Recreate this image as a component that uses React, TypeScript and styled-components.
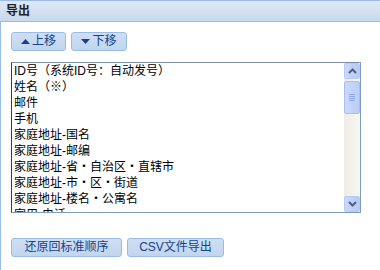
import React from 'react';
import styled, { createGlobalStyle } from 'styled-components';

const GlobalStyle = createGlobalStyle`
  html, body {
    margin: 0;
    padding: 0;
    background: #ffffff;
  }
  body {
    font-family: "Liberation Sans", "Noto Sans CJK SC", sans-serif;
    font-size: 12px;
  }
`;

const fields = [
  'ID号（系统ID号：自动发号）',
  '姓名（※）',
  '邮件',
  '手机',
  '家庭地址-国名',
  '家庭地址-邮编',
  '家庭地址-省・自治区・直辖市',
  '家庭地址-市・区・街道',
  '家庭地址-楼名・公寓名',
  '家用-电话',
];

function Triangle({ down }: { down?: boolean }) {
  return (
    <svg width="9" height="5" viewBox="0 0 9 5">
      {down ? <path d="M0 0H9L4.5 5Z" fill="#15428b" /> : <path d="M0 5H9L4.5 0Z" fill="#15428b" />}
    </svg>
  );
}

function Chevron({ down }: { down?: boolean }) {
  return (
    <svg width="9" height="6" viewBox="0 0 9 6">
      <path
        d={down ? 'M1 1L4.5 4.5L8 1' : 'M1 5L4.5 1.5L8 5'}
        fill="none"
        stroke="#4d6185"
        strokeWidth="2"
      />
    </svg>
  );
}

export default function App() {
  return (
    <>
      <GlobalStyle />
      <Panel>
        <Header>
          <Title>导出</Title>
        </Header>
        <Body>
          <ButtonRow>
            <ToolButton $w={55}>
              <Triangle />
              上移
            </ToolButton>
            <ToolButton $w={56}>
              <Triangle down />
              下移
            </ToolButton>
          </ButtonRow>

          <ListBox>
            <Items>
              {fields.map((f) => (
                <Item key={f}>{f}</Item>
              ))}
            </Items>
            <ScrollBar>
              <ScrollButton>
                <Chevron />
              </ScrollButton>
              <Thumb>
                <Grip />
                <Grip />
                <Grip />
                <Grip />
              </Thumb>
              <Track />
              <ScrollButton>
                <Chevron down />
              </ScrollButton>
            </ScrollBar>
          </ListBox>

          <ButtonRow $bottom>
            <ToolButton $w={111}>还原回标准顺序</ToolButton>
            <ToolButton $w={97}>CSV文件导出</ToolButton>
          </ButtonRow>
        </Body>
      </Panel>
    </>
  );
}

const Panel = styled.div`
  display: flex;
  flex-direction: column;
  width: 380px;
  height: 270px;
  overflow: hidden;
`;

const Header = styled.div`
  display: flex;
  align-items: center;
  height: 20px;
  padding-left: 6px;
  border-top: 1px solid #99bbe8;
  border-bottom: 1px solid #99bbe8;
  background: linear-gradient(to bottom, #dfe9f6, #c6d8ee);
`;

const Title = styled.div`
  font-weight: bold;
  font-size: 12px;
  color: #222222;
  line-height: 20px;
`;

const Body = styled.div`
  flex: 1;
  display: flex;
  flex-direction: column;
  padding: 10px 0 0 10px;
  border-left: 1px solid #99bbe8;
`;

const ButtonRow = styled.div<{ $bottom?: boolean }>`
  display: flex;
  gap: 5px;
  margin-top: ${(p) => (p.$bottom ? '25px' : '0')};
`;

const ToolButton = styled.button<{ $w: number }>`
  display: flex;
  align-items: center;
  justify-content: center;
  gap: 2px;
  width: ${(p) => p.$w}px;
  height: 19px;
  padding: 0;
  border: 1px solid #99bbe8;
  border-radius: 3px;
  background: linear-gradient(to bottom, #cfdff3, #c1d5ee);
  color: #15428b;
  font-family: "Liberation Sans", "Noto Sans CJK SC", sans-serif;
  font-size: 12px;
  line-height: 17px;
  cursor: pointer;
`;

const ListBox = styled.div`
  display: flex;
  width: 348px;
  height: 149px;
  margin-top: 11px;
  border-style: solid;
  border-width: 1px;
  border-color: #7a8ea6 #7f9db9 #7f9db9 #3c3c3c;
  background: #ffffff;
  overflow: hidden;
`;

const Items = styled.div`
  flex: 1;
  overflow: hidden;
`;

const Item = styled.div`
  height: 16px;
  line-height: 16px;
  padding-left: 2px;
  color: #000000;
  font-size: 12px;
  white-space: nowrap;
`;

const ScrollBar = styled.div`
  display: flex;
  flex-direction: column;
  width: 16px;
  background: linear-gradient(to right, #eeede5, #f7f6f2);
`;

const ScrollButton = styled.div`
  display: flex;
  align-items: center;
  justify-content: center;
  height: 16px;
  border: 1px solid #b8cbf5;
  border-radius: 2px;
  box-sizing: border-box;
  background: linear-gradient(to right, #c9d8fc, #b7c9f7);
`;

const Thumb = styled.div`
  display: flex;
  flex-direction: column;
  align-items: center;
  justify-content: center;
  gap: 1px;
  height: 33px;
  margin-top: 2px;
  border: 1px solid #a9bff4;
  border-radius: 2px;
  box-sizing: border-box;
  background: linear-gradient(to right, #cad9fd, #bccdf8);
`;

const Grip = styled.div`
  width: 6px;
  height: 1px;
  background: #8ea6e8;
`;

const Track = styled.div`
  flex: 1;
`;
